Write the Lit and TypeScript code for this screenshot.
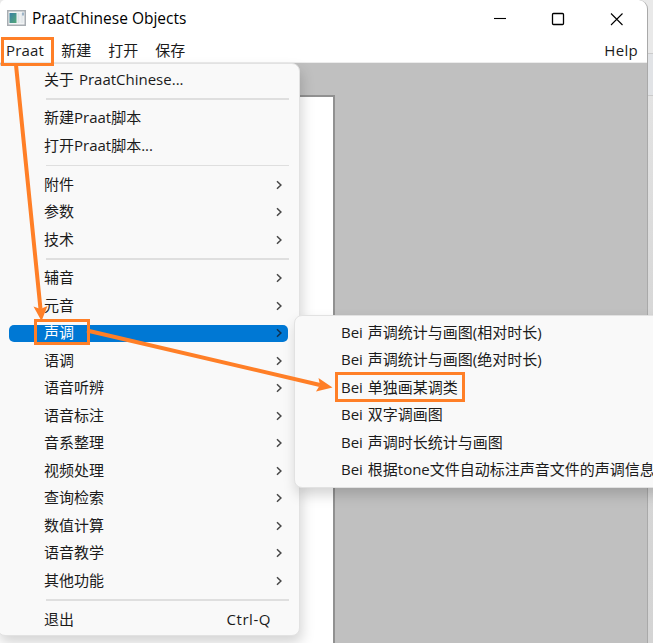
import { LitElement, html, css, nothing } from "lit";
import { customElement, property } from "lit/decorators.js";

interface Entry {
  label: string;
  sub?: boolean;
  active?: boolean;
  shortcut?: string;
}

const GROUPS: Entry[][] = [
  [{ label: "关于 PraatChinese..." }],
  [{ label: "新建Praat脚本" }, { label: "打开Praat脚本..." }],
  ["附件", "参数", "技术"].map((label) => ({ label, sub: true })),
  [
    "辅音", "元音", "声调", "语调", "语音听辨", "语音标注",
    "音系整理", "视频处理", "查询检索", "数值计算", "语音教学", "其他功能",
  ].map((label) => ({ label, sub: true, active: label === "声调" })),
  [{ label: "退出", shortcut: "Ctrl-Q" }],
];

const TONE_GROUPS: Entry[][] = [
  [
    { label: "Bei 声调统计与画图(相对时长)" },
    { label: "Bei 声调统计与画图(绝对时长)" },
    { label: "Bei 单独画某调类" },
    { label: "Bei 双字调画图" },
    { label: "Bei 声调时长统计与画图" },
    { label: "Bei 根据tone文件自动标注声音文件的声调信息" },
  ],
];

@customElement("popup-menu")
class PopupMenu extends LitElement {
  @property({ attribute: false }) groups: Entry[][] = [];

  static styles = css`
    :host {
      display: block;
      box-sizing: border-box;
      background: #f9f9f9;
      border: 1px solid #e2e2e2;
      border-radius: 8px;
      box-shadow: 2px 7px 13px rgba(0, 0, 0, 0.17);
      padding-top: 2px;
      word-spacing: 1px;
    }
    .row {
      position: relative;
      display: flex;
      align-items: center;
      justify-content: space-between;
      height: 27.5px;
      padding: 0 28px 0 46px;
      white-space: nowrap;
      color: #1b1b1b;
    }
    .label,
    .shortcut {
      position: relative;
      line-height: 20px;
      padding-bottom: var(--text-lift, 0);
    }
    .shortcut { letter-spacing: 0.55px; }
    .row.sub { padding-right: 16px; }
    .row.active { color: #fff; }
    .row.active::before {
      content: "";
      position: absolute;
      inset: 5px 11px 5px 11px;
      border-radius: 5px;
      background: #0078d4;
    }
    .chevron {
      position: relative;
      width: 7px;
      height: 10px;
      fill: none;
      stroke: #484848;
      stroke-width: 1.5;
    }
    .active .chevron { stroke: #12304d; }
    .line {
      height: 11.2px;
      display: flex;
      align-items: center;
    }
    .line::before {
      content: "";
      flex: 1;
      height: 1.5px;
      margin: 0 10px 0 48px;
      background: #dfdfdf;
    }
  `;

  render() {
    return this.groups.map(
      (group, i) => html`
        ${i ? html`<div class="line"></div>` : nothing}
        ${group.map(
          (e) => html`<div class="row ${e.sub ? "sub" : ""} ${e.active ? "active" : ""}">
            <span class="label">${e.label}</span>
            ${e.sub
              ? html`<svg class="chevron" viewBox="0 0 7 10"><path d="M1 1.2 4.9 5 1 8.8" /></svg>`
              : nothing}
            ${e.shortcut ? html`<span class="shortcut">${e.shortcut}</span>` : nothing}
          </div>`
        )}
      `
    );
  }
}

@customElement("app-root")
class AppRoot extends LitElement {
  static styles = css`
    :host {
      display: block;
      position: relative;
      width: 653px;
      height: 643px;
      overflow: hidden;
      background: linear-gradient(#e9e9e9 0 53px, #e1e3e6 53px 95px, #e3e3e3 95px, #d8d8d8 300px, #d4d4d4);
      font: 15px/20px "Open Sans", "Noto Sans CJK SC", sans-serif;
      color: #1b1b1b;
    }
    .window {
      box-sizing: border-box;
      display: flex;
      flex-direction: column;
      width: 648px;
      height: 643px;
      background: #fff;
      border-right: 1px solid #a9a9a9;
      border-radius: 5px 9px 0 0;
      overflow: hidden;
    }
    .titlebar {
      display: flex;
      align-items: center;
      height: 38px;
      padding-left: 7px;
      color: #000;
    }
    .app-icon { width: 19px; height: 16px; margin-right: 6px; margin-top: -2px; }
    .title { flex: 1; font-size: 15.5px; padding-bottom: 2px; white-space: nowrap; }
    .controls {
      width: 131px;
      height: 14px;
      margin-right: 23px;
      fill: none;
      stroke: #000;
      stroke-width: 1.1;
    }
    .menubar {
      display: flex;
      align-items: center;
      gap: 17px;
      box-sizing: border-box;
      height: 25px;
      padding: 0 9px 1px 6px;
      border-bottom: 1px solid #ececec;
      white-space: nowrap;
    }
    .latin { letter-spacing: 0.2px; }
    .help { margin-left: auto; letter-spacing: 0.3px; }
    .canvas {
      flex: 1;
      display: flex;
      padding-top: 32px;
      background: #c0c0c0;
    }
    .list {
      box-sizing: border-box;
      width: 335px;
      background: #fff;
      border: solid #919191;
      border-width: 2px 2px 0 0;
    }
    .main-menu {
      --text-lift: 2px;
      position: absolute;
      left: -3px;
      top: 63px;
      width: 303px;
      height: 573px;
    }
    .tone-menu {
      position: absolute;
      left: 294px;
      top: 315px;
      width: 385px;
      height: 173px;
    }
    .marks {
      position: absolute;
      inset: 0;
      width: 653px;
      height: 643px;
      fill: none;
      stroke: #ff7f27;
    }
    .frame { stroke-width: 3; }
    .shaft { stroke-width: 4; }
    .tip { fill: #ff7f27; stroke: none; }
    .edge { stroke: #cbcbcb; stroke-width: 1; }
  `;

  render() {
    return html`
      <div class="window">
        <div class="titlebar">
          <svg class="app-icon" viewBox="0 0 19 16">
            <defs>
              <linearGradient id="pane" x1="0" y1="0" x2="1" y2="1">
                <stop offset="0" stop-color="#397fa5" />
                <stop offset="1" stop-color="#54a878" />
              </linearGradient>
            </defs>
            <rect x=".75" y=".75" width="17.5" height="14.5" fill="#f2f4f5" stroke="#a8adb2" stroke-width="1.5" />
            <rect x="2.5" y="3" width="7" height="10" fill="url(#pane)" />
            <rect x="10.5" y="3" width="2" height="10" fill="#dde3e7" />
            <rect x="13.5" y="3" width="3" height="10" fill="#e5e9ec" />
            <path d="M16 2.5v3" stroke="#527ca0" />
          </svg>
          <span class="title">PraatChinese Objects</span>
          <svg class="controls" viewBox="0 0 131 14">
            <path d="M1 6.5h12" />
            <rect x="59.5" y="1.5" width="11" height="11" rx="1" stroke-width="1.3" />
            <path d="m118 1.5 11.5 11.5m0-11.5L118 13" />
          </svg>
        </div>
        <div class="menubar">
          <span class="latin">Praat</span><span>新建</span><span>打开</span><span>保存</span>
          <span class="help">Help</span>
        </div>
        <div class="canvas"><div class="list"></div></div>
      </div>
      <popup-menu class="main-menu" .groups=${GROUPS}></popup-menu>
      <popup-menu class="tone-menu" .groups=${TONE_GROUPS}></popup-menu>
      <svg class="marks" viewBox="0 0 653 643">
        <path class="edge" d="M648 53.5h5M648 95.5h5" />
        <rect class="frame" x="2.5" y="38.5" width="50" height="26" />
        <rect class="frame" x="35.5" y="320.5" width="53" height="23" />
        <rect class="frame" x="336.5" y="373.5" width="127" height="27" />
        <path class="shaft" d="M16 65 40.5 309M87 330.5 320 385" />
        <path class="tip" d="M41.5 321 33.5 306.5 40.5 309 47.5 306Z" />
        <path class="tip" d="M332.5 387.5 316 391.5 320 385 318.5 378Z" />
      </svg>
    `;
  }
}
